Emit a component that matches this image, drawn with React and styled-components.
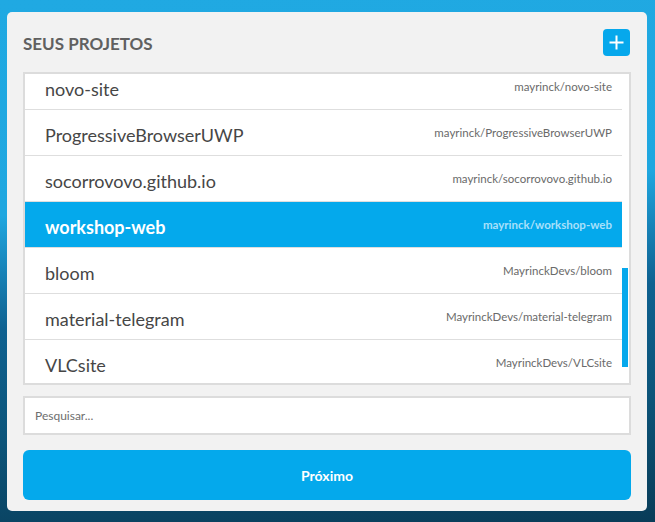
import React, { useLayoutEffect, useRef } from 'react';
import styled, { createGlobalStyle } from 'styled-components';

const GlobalStyle = createGlobalStyle`
  html, body {
    margin: 0;
    padding: 0;
    height: 100%;
  }
  body {
    font-family: Lato, "Open Sans", sans-serif;
    background: linear-gradient(176deg, #20a9e2 0%, #1fa7e0 38%, #1782b7 48%, #0f6190 58%, #0c5479 78%, #093c58 100%);
    min-height: 522px;
  }
`;

const Page = styled.div`
  padding: 12px 8px 11px 7px;
`;

const Card = styled.div`
  background: #f2f2f2;
  border-radius: 5px;
  padding: 17px 16px 11px;
  display: flex;
  flex-direction: column;
`;

const Header = styled.div`
  display: flex;
  align-items: center;
  justify-content: space-between;
  margin-bottom: 16px;
  padding-right: 1px;
`;

const Title = styled.h2`
  margin: 0;
  font-size: 17px;
  font-weight: 700;
  color: #606060;
  padding-top: 2px;
`;

const AddButton = styled.button`
  width: 27px;
  height: 27px;
  border: none;
  border-radius: 4px;
  background: #06a8ec;
  display: flex;
  align-items: center;
  justify-content: center;
  padding: 0;
  cursor: pointer;
`;

const ListBox = styled.div`
  border: 2px solid #dcdcdc;
  background: #fff;
  height: 309px;
  display: flex;
`;

const Viewport = styled.div`
  flex: 1;
  overflow: hidden;
`;

const Track = styled.div`
  width: 7px;
  position: relative;
`;

const Thumb = styled.div`
  position: absolute;
  left: 0;
  width: 6px;
  background: #06a8ec;
`;

const Row = styled.div`
  height: 45px;
  border-bottom: 1px solid #dedede;
  display: flex;
  align-items: center;
  justify-content: space-between;
  padding: 0 10px 0 20px;
  background: ${(p) => (p.$active ? '#04a9ec' : '#fff')};
`;

const Name = styled.span`
  font-size: 18px;
  padding-top: 5px;
  color: ${(p) => (p.$active ? '#fff' : '#464646')};
  font-weight: ${(p) => (p.$active ? 700 : 400)};
`;

const Repo = styled.span`
  font-size: 11.5px;
  color: ${(p) => (p.$active ? '#a9e0fa' : '#6a6a6a')};
  font-weight: ${(p) => (p.$active ? 700 : 400)};
`;

const Search = styled.input`
  margin-top: 11px;
  height: 39px;
  box-sizing: border-box;
  border: 2px solid #dcdcdc;
  background: #fff;
  padding: 0 10px;
  font-family: inherit;
  font-size: 12px;
  color: #444;
  outline: none;

  &::placeholder {
    color: #6e6e6e;
  }
`;

const NextButton = styled.button`
  margin-top: 15px;
  height: 50px;
  border: none;
  border-radius: 6px;
  background: #04a9ec;
  color: #fff;
  font-family: inherit;
  font-size: 14px;
  font-weight: 700;
  cursor: pointer;
`;

const projects = [
  ['dotfiles', 'mayrinck/dotfiles'],
  ['blog', 'mayrinck/blog'],
  ['curriculo', 'mayrinck/curriculo'],
  ['hackathon-2017', 'mayrinck/hackathon-2017'],
  ['landing-page', 'mayrinck/landing-page'],
  ['flexbox-grid', 'mayrinck/flexbox-grid'],
  ['todo-react', 'mayrinck/todo-react'],
  ['meetup-front', 'mayrinck/meetup-front'],
  ['api-node', 'mayrinck/api-node'],
  ['pomodoro', 'mayrinck/pomodoro'],
  ['electron-app', 'mayrinck/electron-app'],
  ['portfolio', 'mayrinck/portfolio'],
  ['snippets', 'mayrinck/snippets'],
  ['novo-site', 'mayrinck/novo-site'],
  ['ProgressiveBrowserUWP', 'mayrinck/ProgressiveBrowserUWP'],
  ['socorrovovo.github.io', 'mayrinck/socorrovovo.github.io'],
  ['workshop-web', 'mayrinck/workshop-web'],
  ['bloom', 'MayrinckDevs/bloom'],
  ['material-telegram', 'MayrinckDevs/material-telegram'],
  ['VLCsite', 'MayrinckDevs/VLCsite'],
  ['site-institucional', 'MayrinckDevs/site-institucional'],
];

const SCROLL_TOP = 13 * 46 + 10;
const VIEW_HEIGHT = 309;
const CONTENT_HEIGHT = projects.length * 46;

const PlusIcon = () => (
  <svg width="15" height="15" viewBox="0 0 15 15">
    <path d="M7.5 0.5v14M0.5 7.5h14" stroke="#fff" strokeWidth="2" fill="none" />
  </svg>
);

export default function App() {
  const viewRef = useRef(null);

  useLayoutEffect(() => {
    if (viewRef.current) viewRef.current.scrollTop = SCROLL_TOP;
  }, []);

  const thumbHeight = (VIEW_HEIGHT * VIEW_HEIGHT) / CONTENT_HEIGHT;
  const thumbTop = (SCROLL_TOP * VIEW_HEIGHT) / CONTENT_HEIGHT;

  return (
    <>
      <GlobalStyle />
      <Page>
        <Card>
          <Header>
            <Title>SEUS PROJETOS</Title>
            <AddButton aria-label="Adicionar">
              <PlusIcon />
            </AddButton>
          </Header>
          <ListBox>
            <Viewport ref={viewRef}>
              {projects.map(([name, repo]) => {
                const active = name === 'workshop-web';
                return (
                  <Row key={repo} $active={active}>
                    <Name $active={active}>{name}</Name>
                    <Repo $active={active}>{repo}</Repo>
                  </Row>
                );
              })}
            </Viewport>
            <Track>
              <Thumb style={{ top: thumbTop, height: thumbHeight }} />
            </Track>
          </ListBox>
          <Search placeholder="Pesquisar..." />
          <NextButton>Próximo</NextButton>
        </Card>
      </Page>
    </>
  );
}
